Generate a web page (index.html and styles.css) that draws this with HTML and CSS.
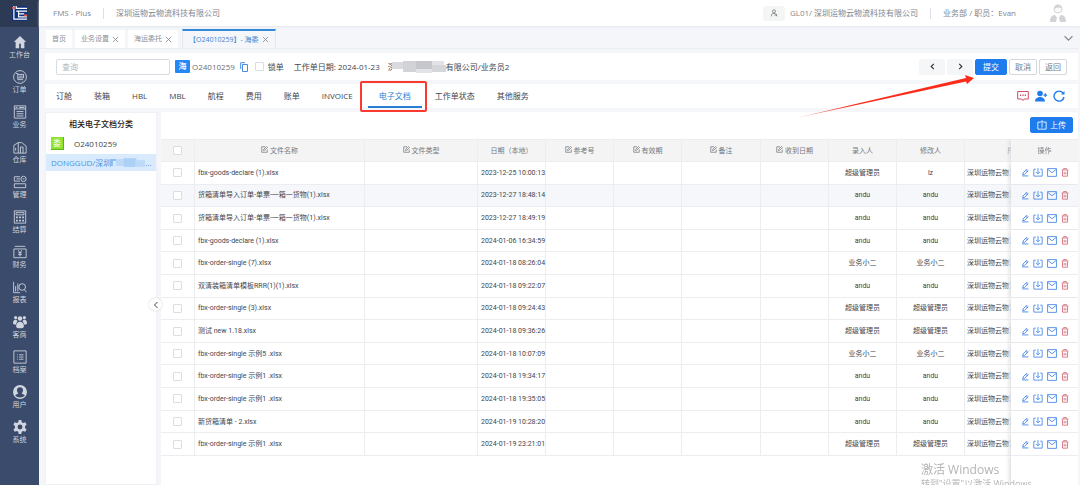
FILE: index.html
```html
<!DOCTYPE html>
<html lang="zh-CN">
<head>
<meta charset="utf-8">
<title>FMS - Plus</title>
<link rel="stylesheet" href="styles.css">
</head>
<body>
<svg class="defs" aria-hidden="true">
  <symbol id="edit-box" viewBox="0 0 14 14"><path d="M8 1.5H1.5v11h11V7M5 9l.5-2.5L11 1l2 2-5.500 5.500z"/></symbol>
  <symbol id="pencil" viewBox="0 0 14 14"><path d="M3 11l.6-3.200L10 1.500 12.500 4 6 10.400zM8.500 3.200l2.400 2.400M2 13h11"/></symbol>
  <symbol id="download" viewBox="0 0 18 16"><path d="M5 2H1.500v12.500h15V2H13M9 0v10M5.500 7L9 10.500 12.500 7"/></symbol>
  <symbol id="mail" viewBox="0 0 18 16"><path d="M1 1h16v14H1zM1 2l8 6.500L17 2"/></symbol>
  <symbol id="trash" viewBox="0 0 14 16"><path d="M1 3.500h12M4.500 3V1h5v2M2.500 4v10.500h9V4M5.500 7v4.500M8.500 7v4.500"/></symbol>
</svg>
<div class="app">
  <aside class="sidebar">
    <div class="logo">
      <svg viewBox="0 0 16 16"><path class="logo-base" d="M0 0h16v16H0z"/><path class="logo-lines" d="M2 0v14h14M4.500 0v2.500H16M4.500 5.500H16M7 5.500v6h9M7 8.500h6"/><path class="logo-dots" d="M0 1h3v2H0zM13 9h3v2h-3z"/></svg>
    </div>
    <nav class="menu">
      <a href="#"><svg viewBox="0 0 16 16" class="solid"><path d="M8 1L1 8h2v7h4v-5h2v5h4V8h2z"/></svg>工作台</a>
      <a href="#"><svg viewBox="0 0 16 16"><circle cx="8" cy="8" r="7.300"/><path d="M3.500 4h2v7h6M5.500 5h6.500v4H5.500M7 7h4M6.500 13h.5M10.500 13h.5"/></svg>订单</a>
      <a href="#"><svg viewBox="0 0 16 16"><path d="M1.500 1h13v14h-13zM1.500 4.500h13M4 7.500h8M4 10h8M4 12.500h8M3 2.800h2M7 2.800h6"/></svg>业务</a>
      <a href="#"><svg viewBox="0 0 16 16"><path d="M1 15V6l5-3v12M6 3h4l5 4v8H1M8.500 15V8h3v7M3 9v3"/></svg>仓库</a>
      <a href="#"><svg viewBox="0 0 16 16"><path d="M8 2H1.500v5H8M1.500 10h13v4.500h-13z"/><circle cx="12" cy="4.500" r="3"/><path d="M11 4.500h2M4 4.500h4"/></svg>管理</a>
      <a href="#"><svg viewBox="0 0 16 16"><path d="M1.500 1h13v14h-13zM3.500 3h9v2.500h-9z"/><path stroke-dasharray="2 1.500" stroke-width="2" d="M3.500 8.500h9.500M3.500 12h9.500"/></svg>结算</a>
      <a href="#"><svg viewBox="0 0 16 16"><path d="M2 1.500h12M1 4.500h14v10H1zM6 6l2 3 2-3M8 9v4M6 9h4M6 11h4"/></svg>财务</a>
      <a href="#"><svg viewBox="0 0 16 16"><path d="M.7 2v12.500H8M3 13V7M5.500 13V4"/><circle cx="10.500" cy="8" r="3.800"/><path d="M13 11l2.500 3"/></svg>报表</a>
      <a href="#"><svg viewBox="0 0 16 16" class="solid"><circle cx="3" cy="3" r="1.800"/><circle cx="13" cy="3" r="1.800"/><circle cx="8" cy="4" r="2.600"/><path d="M0 9c0-5 5-4 5-2l-2 4C1 11 0 10 0 9zM16 9c0-5-5-4-5-2l2 4c2 0 3-1 3-2zM3.500 13c0-7 9-7 9 0 0 3-9 3-9 0z"/></svg>客商</a>
      <a href="#"><svg viewBox="0 0 16 16"><path d="M1 1h14v14H1zM4.500 5.500h1M7 5.500h5M4.500 8h1M7 8h5M4.500 10.500h1M7 10.500h5"/></svg>档案</a>
      <a href="#"><svg viewBox="0 0 16 16" class="solid"><path fill-rule="evenodd" d="M8 0a8 8 0 100 16A8 8 0 008 0zM8 2.500c4.500 0 4 5 2 7 0 1 3 1 3.500 2.500-2 3-9 3-11 0C3 10.500 6 10.500 6 9.500c-2-2-2.500-7 2-7z"/></svg>用户</a>
      <a href="#"><svg viewBox="0 0 16 16" class="solid"><path fill-rule="evenodd" d="M6.500 0h3l.5 2.500 1.500.8L14 2.500l1.500 2.700L13.700 7v2l1.800 1.800L14 13.500l-2.500-.8-1.500.8-.5 2.500h-3L6 13.500l-1.500-.8-2.500.8L.5 10.800 2.300 9V7L.5 5.200 2 2.500l2.500.8L6 2.500zM8 5.200a2.800 2.800 0 100 5.600 2.800 2.800 0 000-5.600z"/></svg>系统</a>
    </nav>
  </aside>
  <div class="main">
    <header class="topbar">
      <span>FMS - Plus</span><i class="sep"></i><span>深圳运物云物流科技有限公司</span>
      <div class="account">
        <button class="user-btn" aria-label="用户"><svg viewBox="0 0 12 12"><circle cx="6" cy="3.500" r="2.300"/><path d="M2 11c0-6 6-5 7-3M6.500 9h4M9 7.500L10.500 11"/></svg></button>
        <span>GL01/ 深圳运物云物流科技有限公司</span><i class="sep"></i><span>业务部 / 职员：Evan</span>
        <svg class="avatar" viewBox="0 0 16 18"><circle cx="8" cy="5" r="4" fill="#fafafa" stroke="#d5d5d8"/><path d="M4 5c0-6 8-6 8 0-2-2-5-2-8 0z" fill="#d5d5d8"/><path d="M0 18c0-6 3-7 5-7l3 4 3-4c2 0 5 1 5 7z" fill="#d2d3d6"/><path d="M7 13h2l1 5H6z" fill="#fff"/></svg>
      </div>
    </header>
    <div class="pages">
      <a class="page" href="#">首页</a>
      <a class="page" href="#">业务设置<svg viewBox="0 0 8 8"><path d="M1 1l6 6M7 1L1 7"/></svg></a>
      <a class="page" href="#">海运委托<svg viewBox="0 0 8 8"><path d="M1 1l6 6M7 1L1 7"/></svg></a>
      <a class="page current" href="#">【O24010259】- 海委<svg viewBox="0 0 8 8"><path d="M1 1l6 6M7 1L1 7"/></svg></a>
      <svg class="more" viewBox="0 0 8 8"><path d="M.5 2L4 5.500 7.500 2"/></svg>
    </div>
    <section class="card toolbar">
      <input class="search" type="text" placeholder="查询" aria-label="查询">
      <b class="badge">海</b>
      <span class="order">O24010259</span>
      <svg class="copy" viewBox="0 0 8 10"><path d="M2.500 2.500h5v7h-5zM5 .7H.7V7"/></svg>
      <label class="lock"><input type="checkbox">锁单</label>
      <span class="date">工作单日期: 2024-01-23</span>
      <span class="company">深<svg class="mask" viewBox="0 0 54 12"><path d="M0 0h54v12H0z" fill="#fff"/><path d="M0 1h12v7H0z" fill="#d9dadd"/><path d="M11 0h14v11H11z" fill="#d2d3d7"/><path d="M24 0h16v8H24z" fill="#c5c7cd"/><path d="M24 8h16v4H24zM40 0h12v5H40z" fill="#e2e3e6"/><path d="M40 4h14v7H40z" fill="#d5d6da"/></svg>有限公司/业务员2</span>
      <div class="actions">
        <button class="arrow" aria-label="上一个"><svg viewBox="0 0 8 8"><path d="M5.500 1l-3 3 3 3"/></svg></button>
        <button class="arrow" aria-label="下一个"><svg viewBox="0 0 8 8"><path d="M2.500 1l3 3-3 3"/></svg></button>
        <button class="btn primary submit">提交</button>
        <button class="btn">取消</button>
        <button class="btn">返回</button>
      </div>
    </section>
    <nav class="card sections">
      <a href="#">订舱</a><a href="#">装箱</a><a href="#">HBL</a><a href="#">MBL</a><a href="#">航程</a><a href="#">费用</a><a href="#">账单</a><a href="#">INVOICE</a><a href="#" class="active">电子文档</a><a href="#">工作单状态</a><a href="#">其他服务</a>
      <div class="tools">
        <svg class="chat" viewBox="0 0 12 12"><path d="M.7 1.500h10.600v7.500H7.300L6 10.500 4.700 9H.7z"/><path d="M3 5.200h1.200M5.400 5.200h1.200M7.800 5.200H9" stroke-width="1.500"/></svg>
        <svg class="add-user" viewBox="0 0 12 12"><circle cx="5" cy="3.500" r="2.800"/><path d="M0 11.500C0 5.500 10 5.500 10 11.500zM8.500 4.500H12v1.200H8.500zM9.700 3.200h1.200V7H9.700z"/></svg>
        <svg class="refresh" viewBox="0 0 12 12"><path d="M10 3A5 5 0 1011 7" stroke-width="1.400"/><path d="M11.500 1v3.500H8z" fill="currentColor" stroke="none"/></svg>
      </div>
    </nav>
    <div class="content">
      <aside class="card tree">
        <h2>相关电子文档分类</h2>
        <a class="node" href="#"><b class="tag">委</b>O24010259</a>
        <a class="node leaf" href="#">DONGGUD/深圳<svg class="blot" viewBox="0 0 35 10"><path d="M0 1h6v2H2v5H0z" fill="#8bbcf0"/><path d="M5 1h9v7H5z" fill="#bdd9f8"/><path d="M13 0h13v9H13z" fill="#acd0f6"/><path d="M25 2h10v7H25z" fill="#bddafa"/></svg>...</a>
        <button class="fold" aria-label="收起"><svg viewBox="0 0 8 8"><path d="M5.500 1l-3 3 3 3"/></svg></button>
      </aside>
      <section class="card docs">
        <div class="docs-bar"><button class="btn primary upload"><svg viewBox="0 0 12 12"><path d="M4 2.500H1v8.500h10V2.500H8M6 9V1M3.800 3L6 .8 8.200 3"/></svg>上传</button></div>
        <div class="table-wrap">
          <table>
            <colgroup><col class="w-check"><col class="w-name"><col class="w-type"><col class="w-std"><col class="w-std"><col class="w-std"><col class="w-note"><col class="w-std"><col class="w-std"><col class="w-std"><col class="w-org"><col class="w-act"></colgroup>
            <thead><tr>
              <th><input type="checkbox" aria-label="全选"></th>
              <th><svg><use href="#edit-box"/></svg>文件名称</th>
              <th><svg><use href="#edit-box"/></svg>文件类型</th>
              <th>日期（本地）</th>
              <th><svg><use href="#edit-box"/></svg>参考号</th>
              <th><svg><use href="#edit-box"/></svg>有效期</th>
              <th><svg><use href="#edit-box"/></svg>备注</th>
              <th><svg><use href="#edit-box"/></svg>收到日期</th>
              <th>录入人</th><th>修改人</th><th>所属公司</th><th class="ops">操作</th>
            </tr></thead>
            <tbody id="rows"></tbody>
          </table>
          <div class="ops-fill"></div>
        </div>
      </section>
    </div>
  </div>
  <svg class="pointer" viewBox="0 0 178 44" aria-hidden="true"><defs><linearGradient id="fade"><stop offset="0" stop-color="#fb2c1c" stop-opacity=".45"/><stop offset=".3" stop-color="#fb2c1c"/></linearGradient></defs><path d="M0 43L170 3l-1-3 9 3-7 6-1-2.500z" fill="url(#fade)"/></svg>
  <div class="watermark"><strong>激活 Windows</strong><span>转到"设置"以激活 Windows。</span></div>
</div>
<script src="app.js"></script>
</body>
</html>
```
FILE: styles.css
```css
* { box-sizing: border-box; }
body { margin: 0; font: 8px/12px "Open Sans", "Noto Sans CJK SC", sans-serif; color: #42464e; background: #f4f6f9; }
a { color: inherit; text-decoration: none; }
button, input { font: inherit; color: inherit; margin: 0; padding: 0; }
svg { flex: none; fill: none; stroke: currentColor; }
.defs { position: absolute; width: 0; height: 0; }
.app { position: relative; display: flex; height: 100vh; overflow: hidden; }

.sidebar { flex: none; width: 39px; background: #3b4b6b; color: #d0d5df; }
.logo { display: flex; align-items: center; justify-content: center; height: 27px; background: #2d3a53; }
.logo svg { width: 15px; height: 15px; stroke: none; }
.logo-base { fill: #10307a; }
.logo-lines { stroke: #fff; stroke-width: 1.3; }
.logo-dots { fill: #f0554a; }
.menu { padding-top: 8px; }
.menu a { display: flex; flex-direction: column; align-items: center; height: 35px; gap: 1px; font-size: 7px; line-height: 10px; white-space: nowrap; }
.menu svg { width: 14px; height: 14px; }
.menu .solid { fill: currentColor; stroke: none; }

.main { flex: 1; min-width: 0; display: flex; flex-direction: column; padding-right: 2px; }
.topbar { display: flex; align-items: center; height: 26px; margin-right: -2px; padding: 0 14px; background: #fff; color: #7f858f; box-shadow: 0 1px 2px #e4e7ec; white-space: nowrap; }
.sep { width: 1px; height: 11px; margin: 0 12px; background: #dcdfe5; }
.account { display: flex; align-items: center; margin-left: auto; }
.user-btn { display: flex; align-items: center; justify-content: center; width: 22px; height: 15px; margin-right: 5px; border: 0; border-radius: 2px; background: #f4f5f5; color: #5c6068; }
.user-btn svg { width: 8px; height: 8px; }
.avatar { width: 16px; height: 18px; margin-left: 34px; stroke: none; }

.pages { display: flex; align-items: flex-end; gap: 3px; height: 23px; margin-bottom: 4px; padding: 0 5px 0 7px; border-bottom: 1px solid #e9ecf1; font-size: 7px; color: #8b8f97; }
.page { display: flex; align-items: center; gap: 3px; height: 18px; padding: 0 6px; background: #fff; white-space: nowrap; }
.page svg { width: 7px; height: 7px; stroke-width: 1; }
.page.current { height: 19px; margin-left: 1px; border: 1px solid #e4e8ee; border-top: 2px solid #3388d8; border-bottom: 0; background: #f4f6f9; color: #3d86d5; }
.page.current svg { color: #8b8f97; }
.more { width: 9px; height: 9px; margin: 0 0 5px auto; color: #888; }

.card { background: #fff; }
.toolbar { display: flex; align-items: center; height: 27px; margin: 0 0 4px 6px; padding: 0 11px; white-space: nowrap; }
.search { width: 114px; height: 16px; padding: 0 5px; border: 1px solid #d6dbe4; border-radius: 2px; background: #fff; }
.search::placeholder { color: #b3b6bd; opacity: 1; }
.badge { width: 15px; height: 13px; margin: 0 2px 0 5px; border-radius: 1px; background: #2389f8; color: #fff; font-weight: 500; text-align: center; }
.order { color: #6c7078; }
.copy { width: 8px; height: 10px; margin: 0 7px 0 5px; color: #4b8be0; }
.lock { display: flex; align-items: center; gap: 4px; margin-right: 10px; }
input[type="checkbox"] { appearance: none; display: block; width: 9px; height: 9px; border: 1px solid #dadde3; border-radius: 1px; background: #fff; }
.date { margin-right: 8px; }
.company { display: flex; align-items: center; }
.mask { z-index: 1; width: 54px; height: 12px; margin-left: -4px; stroke: none; }
.actions { display: flex; gap: 2px; margin-left: auto; }
.arrow { display: flex; align-items: center; justify-content: center; width: 26px; height: 16px; border: 0; border-radius: 2px; background: #f5f6f7; color: #333; }
.arrow svg { width: 7px; height: 7px; stroke-width: 1.3; }
.btn { width: 28px; height: 16px; border: 1px solid #d5d8de; border-radius: 2px; background: #fff; color: #777b83; }
.primary { border-color: #1f7ced; background: #1f7ced; color: #fff; }
.submit { width: 32px; }

.sections { display: flex; align-items: stretch; height: 24px; margin: 0 0 4px 6px; line-height: 24px; white-space: nowrap; }
.sections a { padding: 0 11px; }
.sections .active { position: relative; margin: 0 2px 0 4px; border-bottom: 2px solid #2c7fd0; color: #2c7fd0; }
.active::after { content: ""; position: absolute; inset: -3px -5px -6px -8px; border: 2px solid #fb3a2f; border-radius: 2px; }
.tools { display: flex; align-items: center; gap: 6px; margin-left: auto; padding-right: 13px; }
.tools svg { width: 12px; height: 12px; }
.tools .chat { color: #cf4a67; }
.tools .add-user { fill: #1f7ced; stroke: none; }
.tools .refresh { color: #1f7ced; }

.content { flex: 1; min-height: 0; display: flex; gap: 4px; padding-left: 6px; }
.tree { position: relative; flex: none; width: 112px; border: 1px solid #eff1f4; }
.tree h2 { margin: 5px 0 3px; font-size: 8px; line-height: 12px; font-weight: 500; text-align: center; color: #222; }
.node { display: flex; align-items: center; height: 21px; padding: 0 5px; white-space: nowrap; }
.tag { width: 13px; height: 13px; margin-right: 10px; border-right: 1px solid #55b823; border-bottom: 1px solid #55b823; background: #8fe32f; color: #fff; line-height: 11px; text-align: center; font-weight: 400; }
.leaf { height: 17px; background: #d9eafd; color: #4b94e4; }
.blot { width: 34px; height: 10px; stroke: none; }
.fold { position: absolute; z-index: 1; top: 185px; right: -6px; display: flex; align-items: center; justify-content: center; width: 13px; height: 13px; border: 0; border-radius: 50%; background: #fff; box-shadow: 0 0 2px #c8ccd3; }
.fold svg { width: 8px; height: 8px; }

.docs { flex: 1; min-width: 0; display: flex; flex-direction: column; }
.docs-bar { display: flex; justify-content: flex-end; padding: 5px 5px 6px; }
.upload { display: flex; align-items: center; justify-content: center; gap: 3px; width: 43px; }
.upload svg { width: 10px; height: 10px; }
.table-wrap { position: relative; flex: 1; min-height: 0; overflow: hidden; }
table { width: 100%; min-width: 983px; height: 317px; table-layout: fixed; border-collapse: separate; border-spacing: 0; font-family: Roboto, "Noto Sans CJK SC", sans-serif; font-size: 7px; line-height: 12px; white-space: nowrap; }
.w-check { width: 34px; }
.w-name { width: 170px; }
.w-type { width: 113px; }
.w-std { width: 68px; }
.w-act { width: 67px; }
.w-note { width: 79px; }
.w-org { width: 114px; }
th, td { padding: 0 3px; border-right: 1px solid #ebedf0; border-bottom: 1px solid #ebedf0; background: #fff; text-align: center; }
th { height: 23px; border-top: 1px solid #ebedf0; background: #f4f4f4; color: #75787e; font-weight: 400; }
th svg { width: 7px; height: 7px; margin-right: 2px; stroke-width: 1.5; }
td:nth-child(2), td:nth-child(11) { text-align: left; }
td:nth-child(11) { padding-left: 2px; }
th input, td input { margin: 0 auto; }
tbody tr:nth-child(2) td { background: #f5f7fa; }
.ops { position: sticky; right: 0; z-index: 1; }
td.ops, th.ops { border-right: 0; box-shadow: -2px 0 4px #dedfe2; clip-path: inset(0 0 0 -8px); }
.ops-fill { position: absolute; z-index: 0; top: 317px; right: 0; bottom: 0; width: 67px; background: #fff; box-shadow: -2px 0 4px #dedfe2; }
.ops div { display: flex; align-items: center; justify-content: center; gap: 4px; color: #5590ea; }
.icon { display: block; padding: 0; border: 0; background: none; }
.icon svg { display: block; width: 10px; height: 9px; stroke-width: 1.7; }
.icon.slim svg { width: 8px; }
.icon.danger { color: #d77a84; }

.pointer { position: absolute; z-index: 2; top: 75px; right: 106px; width: 178px; height: 44px; stroke: none; }
.watermark { position: absolute; z-index: 2; top: 461px; right: 10px; width: 149px; color: #b4b4b6; white-space: nowrap; }
.watermark strong, .watermark span { display: block; font-weight: 400; }
.watermark strong { font-size: 12px; line-height: 17px; }
.watermark span { font-size: 9px; line-height: 11px; }
```
FILE: app.js
```js
const rows = [
  ["fbx-goods-declare (1).xlsx", "2023-12-25 10:00:13", "超级管理员", "lz"],
  ["货箱清单导入订单-单票-一箱一货物(1).xlsx", "2023-12-27 18:48:14", "andu", "andu"],
  ["货箱清单导入订单-单票-一箱一货物(1).xlsx", "2023-12-27 18:49:19", "andu", "andu"],
  ["fbx-goods-declare (1).xlsx", "2024-01-06 16:34:59", "andu", "andu"],
  ["fbx-order-single (7).xlsx", "2024-01-18 08:26:04", "业务小二", "业务小二"],
  ["双清装箱清单模板RRR(1)(1).xlsx", "2024-01-18 09:22:07", "andu", "andu"],
  ["fbx-order-single (3).xlsx", "2024-01-18 09:24:43", "超级管理员", "超级管理员"],
  ["测试 new 1.18.xlsx", "2024-01-18 09:36:26", "超级管理员", "超级管理员"],
  ["fbx-order-single 示例5 .xlsx", "2024-01-18 10:07:09", "业务小二", "业务小二"],
  ["fbx-order-single 示例1 .xlsx", "2024-01-18 19:34:17", "andu", "andu"],
  ["fbx-order-single 示例1 .xlsx", "2024-01-18 19:35:05", "andu", "andu"],
  ["新货箱清单 - 2.xlsx", "2024-01-19 10:28:20", "andu", "andu"],
  ["fbx-order-single 示例1 .xlsx", "2024-01-19 23:21:01", "超级管理员", "超级管理员"],
];
const icon = (id, label, extra = "") =>
  `<button class="icon ${extra}" aria-label="${label}"><svg><use href="#${id}"/></svg></button>`;
const ops = icon("pencil", "编辑", "slim") + icon("download", "下载") + icon("mail", "邮件") + icon("trash", "删除", "slim danger");
document.getElementById("rows").innerHTML = rows.map(([name, date, creator, editor]) =>
  `<tr><td><input type="checkbox" aria-label="${name}"></td><td>${name}</td><td></td><td>${date}</td>` +
  `<td></td><td></td><td></td><td></td><td>${creator}</td><td>${editor}</td>` +
  `<td>深圳运物云物流科技有限公司</td><td class="ops"><div>${ops}</div></td></tr>`).join("");
```
